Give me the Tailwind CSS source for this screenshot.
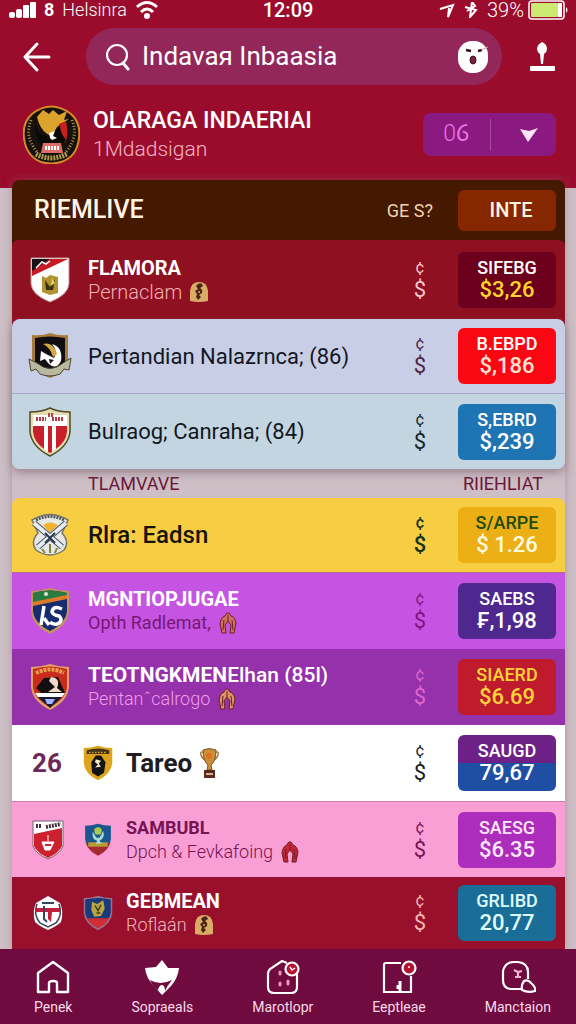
<!DOCTYPE html>
<html lang="id">
<head>
    <meta charset="UTF-8">
    <meta name="viewport" content="width=device-width, initial-scale=1.0">
    <title>Olaraga</title>
    <script src="https://cdn.jsdelivr.net/npm/@tailwindcss/browser@4"></script>
</head>
<body class="min-h-screen flex flex-col overflow-x-hidden bg-[#cdbfc5] font-[Roboto,sans-serif]">

    <!-- shared drawings -->
    <svg class="hidden">
        <symbol id="shield" viewBox="0 0 42 48">
            <path d="M2 4Q12 4 21 1Q30 4 40 4V24Q39 38 21 47Q3 38 2 24Z"/>
        </symbol>
        <symbol id="medal" viewBox="0 0 18 20">
            <path d="M0 19V9Q1 0 9 0Q17 0 18 9V19Q9 21 0 19Z" fill="#d9ac66"/>
            <path d="M8 2Q12 0 13 4L10 6Q13 8 12 11L9 13L11 15L8 18L6 15L7 12L5 9L8 7L6 4Z" fill="#4a2414"/>
            <circle cx="9" cy="10" r="1" fill="#d9ac66"/>
        </symbol>
        <symbol id="hands" viewBox="0 0 18 22">
            <path d="M6 4Q7 0 10 1L12 4Q16 5 17 11L15 21H11L12 13L9 9L6 13L7 21H3L1 12Q2 5 6 4Z" stroke="#6b1f1f" stroke-width="1"/>
            <path d="M9 3V9M5 8L4 18M13 8L14 18" fill="none" stroke="#6b1f1f" stroke-width="1"/>
        </symbol>
    </svg>

    <header class="bg-[#9b0c2c] text-white pb-6">
        <div class="h-[10px] px-2 grid grid-cols-[1fr_auto_1fr] items-center text-[18px] leading-3">
            <div class="flex items-center gap-2">
                <svg class="w-7 h-4" viewBox="0 0 28 16" fill="#fff"><rect x="1" y="10" width="6" height="6" rx="2"/><rect x="8" y="7" width="6" height="9" rx="2"/><rect x="15" y="3" width="6" height="13" rx="1"/><rect x="22" y="0" width="6" height="16" rx="1"/></svg>
                <span class="font-bold">8</span>
                <span class="font-light">Helsinra</span>
                <svg class="w-6 h-5" viewBox="0 0 24 20" fill="none" stroke="#fff" stroke-width="3"><path d="M2 7Q12 -2 22 7M6 12Q12 6 18 12"/><circle cx="12" cy="16" r="1.5" fill="#fff"/></svg>
            </div>
            <span class="font-medium text-[20px]">12:09</span>
            <div class="flex items-center justify-end gap-2">
                <svg class="w-4 h-4" viewBox="0 0 16 16" fill="none" stroke="#fff" stroke-width="2"><path d="M1 7L14 3L9 15L10 6"/></svg>
                <svg class="w-4 h-4" viewBox="0 0 16 16" fill="none" stroke="#fff" stroke-width="2"><path d="M2 5L13 8L7 15L9 0L12 4L4 9"/></svg>
                <span class="font-light text-[20px]">39%</span>
                <svg class="w-10 h-5 -ml-1" viewBox="0 0 40 20"><rect x="1" y="1" width="35" height="18" rx="3" fill="none" stroke="#fff" stroke-width="1.5"/><rect x="3" y="3" width="27" height="14" rx="1" fill="#cdea72"/><rect x="30" y="3" width="4" height="14" fill="#fff"/><path d="M38 7Q41 10 38 13Z" fill="#fff"/></svg>
            </div>
        </div>

        <div class="mt-[18px] pl-5 pr-5 flex items-center">
            <button type="button" aria-label="Kembali" class="w-[66px]">
                <svg class="w-8 h-8" viewBox="0 0 32 32" fill="none" stroke="#fff" stroke-width="3" stroke-linecap="round" stroke-linejoin="round"><path d="M29 16H5M17 3L5 16L17 29"/></svg>
            </button>
            <div class="flex-1 min-w-0 h-[57px] rounded-full bg-[#93275a] flex items-center pl-5 pr-[13px]">
                <svg class="w-6 h-7 shrink-0" viewBox="0 0 24 28" fill="none" stroke="#fff" stroke-width="2.2" stroke-linecap="round"><circle cx="11" cy="12" r="10"/><path d="M17 20L22 26" stroke-width="3"/></svg>
                <input type="text" aria-label="Cari" value="Indavaя Inbaasia" class="flex-1 min-w-0 ml-3 text-[26px] bg-transparent outline-none">
                <button type="button" aria-label="Emoji">
                    <svg class="w-8 h-8" viewBox="0 0 32 32"><rect x="1" y="0" width="30" height="32" rx="14" fill="#fff"/><path d="M9 9L14 10M21 10L25 9" stroke="#331018" stroke-width="2.5" fill="none"/><path d="M24 9L31 6" stroke="#d9a0b5"/><ellipse cx="16" cy="19" rx="3" ry="4" fill="#7c2040" stroke="#3a1020"/></svg>
                </button>
            </div>
            <button type="button" aria-label="Suara" class="ml-[27px]">
                <svg class="w-[27px] h-[30px]" viewBox="0 0 27 30" fill="#fff"><path d="M13 0Q18 2 18 7Q18 10 15 12L14 22H12L11 12Q8 10 8 6Q9 2 13 0Z"/><rect x="1" y="24" width="25" height="5" rx="1"/></svg>
            </button>
        </div>

        <div class="mt-5 pl-[23px] pr-5 flex items-center">
            <svg class="w-[57px] h-[59px] shrink-0" viewBox="0 0 57 59">
                <path d="M9 9Q28 -6 48 9Q58 18 56 33Q54 52 38 57Q28 60 18 57Q3 51 1 33Q-1 18 9 9Z" fill="#17120e" stroke="#d48b26" stroke-width="2"/>
                <path d="M8 15Q1 31 14 47M49 15Q56 31 43 47" fill="none" stroke="#b8964a" stroke-width="3" stroke-dasharray="1 2"/>
                <path d="M14 12L20 5L26 9L30 5L36 10L44 6L41 15L46 14L34 22L29 31Q18 28 14 12Z" fill="#dca42d"/>
                <path d="M36 19L43 16Q46 31 42 38L36 30Z" fill="#c81e1c"/>
                <path d="M12 17Q14 33 28 31L37 20Q37 28 43 35L38 41L18 40Q12 32 12 17Z" fill="#0a0908"/>
                <path d="M26 28L32 26L30 31L34 33L29 35L27 33Z" fill="#fff"/>
                <path d="M20 38H38L40 48H18Z" fill="#dc6d67"/><path d="M22 43H37" stroke="#fff" stroke-width="4" stroke-dasharray="2 1"/>
                <path d="M13 49Q28 57 44 49" fill="none" stroke="#a99647" stroke-width="5" stroke-dasharray="2 1"/>
            </svg>
            <div class="ml-[13px] flex-1 min-w-0">
                <h1 class="text-[23px] leading-7 font-medium whitespace-nowrap">OLARAGA INDAERIAI</h1>
                <p class="text-[21px] leading-7 font-light text-[#f3b4c4]">1Mdadsigan</p>
            </div>
            <button type="button" class="w-[133px] h-[43px] rounded-lg bg-[#8a1a7f] grid grid-cols-2 items-center text-[23px] font-light text-[#e673e6]">
                <span>0ⳓ</span>
                <span class="border-l border-[#a64aa0] h-8 flex items-center justify-center pl-3">
                    <svg class="w-5 h-4" viewBox="0 0 20 16" fill="#fde4f4"><path d="M1 2L10 4L19 1L9 15Z"/></svg>
                </span>
            </button>
        </div>
    </header>

    <main class="flex-1 -mt-2 ml-3 mr-[11px] shadow-[0_0_8px_#80657070]">
        <section class="rounded-t-lg bg-[#451800]">
            <div class="h-[60px] pl-[22px] pr-[9px] flex items-center text-[#fff3e4]">
                <h2 class="flex-1 text-[25px] font-medium">RIEMLIVE</h2>
                <span class="text-[18px] text-[#efd2ae] mr-[25px]">GE S?</span>
                <button type="button" class="w-[98px] h-[41px] rounded-md bg-[#852700] text-[20px] font-medium pl-2">INTE</button>
            </div>
            <div class="rounded-t-md bg-[#8f1021] min-h-[87px] pb-2 pl-4 pr-[9px] flex items-center text-white">
                <svg class="w-11 h-12" viewBox="0 0 44 48">
                    <path d="M3 2H41V28Q40 39 22 46Q4 39 3 28Z" fill="#fff" stroke="#b98e8e"/>
                    <path d="M4 3H40L4 20Z" fill="#c91924"/><path d="M4 3H22L4 15Z" fill="#171214"/><path d="M8 12L14 6L18 8L22 5" stroke="#fff" stroke-width="1.5" fill="none"/>
                    <path d="M14 20L18 22L22 19L30 21V37L22 39L14 36Z" fill="#b19331"/><path d="M17 24L22 31L27 23L25 34L18 34Z" fill="#3a3010"/><path d="M24 22L27 27L23 30" fill="#e4cf63"/>
                </svg>
                <div class="ml-4 flex-1">
                    <h3 class="text-[20px] leading-6 font-bold">FLAMORA</h3>
                    <p class="flex items-center gap-2 text-[20px] leading-6 font-light text-[#f4aeb4]">Pernaclam <svg class="w-[18px] h-5"><use href="#medal"/></svg></p>
                </div>
                <div class="w-5 mr-7 flex flex-col items-center text-[#f7c9cc]"><span class="text-[16px] leading-5">¢</span><span class="text-[22px] leading-6">$</span></div>
                <div class="w-[98px] h-[56px] rounded-md bg-[#6c001c] flex flex-col items-center justify-center font-medium"><span class="text-[18px] leading-5">SIFEBG</span><span class="text-[22px] leading-6 text-[#fcd62b]">$3,26</span></div>
            </div>
        </section>

        <section class="relative -mt-2 rounded-lg overflow-hidden shadow-[0_4px_10px_#7a5a6a90] text-[#131722]">
            <div class="bg-[#c8cee6] min-h-[75px] pl-4 pr-[9px] flex items-center border-b border-[#a9a9cb]">
                <svg class="w-11 h-12" viewBox="0 0 44 48">
                    <path d="M4 3Q14 4 22 1Q31 4 40 3V30Q38 40 22 46Q6 40 4 30Z" fill="#a77b3c"/><path d="M7 6Q22 3 37 6V30Q35 38 22 43Q9 38 7 30Z" fill="#100e10"/>
                    <path d="M1 27L9 31Q22 42 35 31L43 26L41 38L36 37L32 42Q22 46 12 42L8 37L3 39Z" fill="#b8b9a0" stroke="#4c4630"/>
                    <path d="M12 29L13 19L18 22L26 26Q30 19 24 12Q35 15 33 29Q28 39 20 31L17 27Z" fill="#fff"/><path d="M15 12Q25 9 29 22L25 25Q22 15 15 12Z" fill="#d3a940"/><path d="M21 27L26 28L22 32Z" fill="#191818"/>
                </svg>
                <h3 class="ml-4 flex-1 text-[22px]">Pertandian Nalazrnca; (86)</h3>
                <div class="w-5 mr-7 flex flex-col items-center text-[#512446]"><span class="text-[16px] leading-5">¢</span><span class="text-[22px] leading-6">$</span></div>
                <div class="w-[98px] h-[56px] rounded-md bg-[#fb0714] text-white flex flex-col items-center justify-center font-medium"><span class="text-[18px] leading-5">B.EBPD</span><span class="text-[22px] leading-6 text-[#ffe3d2]">$,186</span></div>
            </div>
            <div class="bg-[#c2d5e1] min-h-[75px] pl-4 pr-[9px] flex items-center">
                <svg class="w-11 h-[50px]" viewBox="0 0 44 50">
                    <path d="M2 5Q14 5 22 1Q30 5 42 5V25Q40 40 22 49Q4 40 2 25Z" fill="#e4dcae" stroke="#4c4a22" stroke-width="1.5"/><path d="M5 8H39V25Q37 38 22 46Q7 38 5 25Z" fill="#fff"/>
                    <path d="M5 19H16V42Q6 35 5 25ZM20 19H24V45L22 46L20 45ZM28 19H39V25Q38 35 28 42Z" fill="#c81f2b"/>
                    <path d="M8 12H18M24 12H36M20 8H25" stroke="#b83b45" stroke-width="4" stroke-dasharray="2 1"/>
                </svg>
                <h3 class="ml-4 flex-1 text-[22px]">Bulraog; Canraha; (84)</h3>
                <div class="w-5 mr-7 flex flex-col items-center text-[#14262b]"><span class="text-[16px] leading-5">¢</span><span class="text-[22px] leading-6">$</span></div>
                <div class="w-[98px] h-[56px] rounded-md bg-[#1f74b3] text-white flex flex-col items-center justify-center font-medium"><span class="text-[18px] leading-5">S,EBRD</span><span class="text-[22px] leading-6">$,239</span></div>
            </div>
        </section>

        <div class="h-[29px] pl-[76px] pr-[22px] flex items-center justify-between text-[18px] text-[#6b1638]">
            <span>TLAMVAVE</span>
            <span>RIIEHLIAT</span>
        </div>

        <section class="rounded-t-lg overflow-hidden">
            <div class="bg-[#f7cd42] min-h-[74px] pl-4 pr-[9px] flex items-center text-[#17130a]">
                <svg class="w-11 h-11" viewBox="0 0 44 44">
                    <path d="M4 7Q22 -4 40 7L34 20Q42 29 36 37Q22 47 8 37Q2 29 10 20Z" fill="#e8e9e4" stroke="#777768" stroke-width="1.5"/>
                    <path d="M8 7Q22 0 36 7" fill="none" stroke="#4f565c" stroke-width="3" stroke-dasharray="2 1"/>
                    <path d="M15 12Q22 7 30 12L22 20Z" fill="#f2b32f"/>
                    <path d="M6 10L34 34M38 10L10 34" stroke="#46536a" stroke-width="6"/><path d="M6 10L34 34M38 10L10 34" stroke="#e9edf2" stroke-width="4"/>
                    <path d="M17 20L27 30M27 20L17 30" stroke="#28354d" stroke-width="2"/><path d="M22 31V40M14 36L17 40M29 35L27 40" stroke="#85803f" stroke-width="2"/>
                </svg>
                <h3 class="ml-4 flex-1 text-[24px] font-medium">Rlra: Eadsn</h3>
                <div class="w-5 mr-7 flex flex-col items-center text-[#14331e] font-medium"><span class="text-[16px] leading-5">¢</span><span class="text-[22px] leading-6">$</span></div>
                <div class="w-[98px] h-[56px] rounded-md bg-[#ecaf16] flex flex-col items-center justify-center font-medium"><span class="text-[18px] leading-5 text-[#204b12]">S/ARPE</span><span class="text-[22px] leading-6 text-[#fffbe0]">$ 1.26</span></div>
            </div>
            <div class="bg-[#c654e2] min-h-[77px] pl-4 pr-[9px] flex items-center text-white border-t border-[#b26a8e]">
                <svg class="w-11 h-12" viewBox="0 0 44 48">
                    <use href="#shield" x="1" width="42" height="48" fill="#c4945c"/><path d="M5 6Q22 1 39 6V24Q38 36 22 44Q6 36 5 24Z" fill="#172c70"/><path d="M5 6Q22 1 39 6V10L5 17Z" fill="#2b7a42"/><path d="M5 15L39 8V12L5 19Z" fill="#df7a28"/><circle cx="18" cy="7" r="2" fill="#d5ecd0"/>
                    <path d="M16 19L13 38M16 31L21 38M34 22Q25 18 24 25Q25 28 31 29Q36 34 29 37Q25 38 22 35" fill="none" stroke="#fff" stroke-width="3.5"/>
                </svg>
                <div class="ml-4 flex-1">
                    <h3 class="text-[20px] leading-6 font-bold">MGNTIOPJUGAE</h3>
                    <p class="flex items-center gap-2 text-[18px] leading-6 text-[#761874]">Opth Radlemat, <svg class="w-[18px] h-[22px]" fill="#cf7360"><use href="#hands"/></svg></p>
                </div>
                <div class="w-5 mr-7 flex flex-col items-center text-[#85157c]"><span class="text-[16px] leading-5">¢</span><span class="text-[22px] leading-6">$</span></div>
                <div class="w-[98px] h-[56px] rounded-md bg-[#4e278f] flex flex-col items-center justify-center font-medium"><span class="text-[18px] leading-5">SAEBS</span><span class="text-[22px] leading-6">₣,1,98</span></div>
            </div>
            <div class="bg-[#9531aa] min-h-[76px] pl-4 pr-[9px] flex items-center text-white">
                <svg class="w-11 h-12" viewBox="0 0 44 48">
                    <use href="#shield" x="1" width="42" height="48" fill="#e0a066"/><path d="M5 6Q22 1 39 6V24Q38 36 22 44Q6 36 5 24Z" fill="#c92b1d"/><path d="M8 25L16 15L30 14L37 30L22 38Z" fill="#120f12"/><path d="M8 10Q22 3 36 10" stroke="#e8a04c" stroke-width="4" stroke-dasharray="3 1" fill="none"/>
                    <path d="M23 14Q33 15 29 25L34 29L20 29L27 24L21 18Z" fill="#f0d9c5"/><path d="M7 30H37L34 34H10Z" fill="#fff"/><path d="M10 34H34L22 45Z" fill="#171a35"/><path d="M17 36H27L24 41H19Z" fill="#9fb5ff"/>
                </svg>
                <div class="ml-4 flex-1">
                    <h3 class="text-[21px] leading-6 font-medium whitespace-nowrap"><span class="font-bold">TEOTNGKMEN</span>Elhan (85l)</h3>
                    <p class="flex items-center gap-2 text-[18px] leading-6 font-light text-[#f09cf0]">Pentanˆcalrogo <svg class="w-[18px] h-[22px]" fill="#dc9168"><use href="#hands"/></svg></p>
                </div>
                <div class="w-5 mr-7 flex flex-col items-center text-[#e264cd]"><span class="text-[16px] leading-5">¢</span><span class="text-[22px] leading-6">$</span></div>
                <div class="w-[98px] h-[56px] rounded-md bg-[#c01b2c] text-[#ffd43a] flex flex-col items-center justify-center font-medium"><span class="text-[18px] leading-5">SIAERD</span><span class="text-[22px] leading-6">$6.69</span></div>
            </div>
            <div class="bg-white min-h-[76px] pl-5 pr-[9px] flex items-center text-[#201d22]">
                <span class="w-[50px] text-[26px] font-bold text-[#6e2858]">26</span>
                <svg class="w-8 h-9" viewBox="0 0 42 48"><use href="#shield" fill="#dda51d"/><path d="M6 7Q21 2 36 7V12H6Z" fill="#45321a"/><path d="M9 10H33" stroke="#dda51d" stroke-width="2" stroke-dasharray="2 2"/><path d="M12 23L18 14H25L31 23L29 37L21 42L13 37Z" fill="#151316"/><path d="M18 19L25 21L22 25L25 29L17 30L21 26L17 23Z" fill="#f5e8c7"/></svg>
                <div class="ml-3 flex-1 flex items-center gap-2">
                    <h3 class="text-[26px] font-bold">Tareo</h3>
                    <svg class="w-[19px] h-8" viewBox="0 0 19 32"><path d="M4 6Q0 3 1 8Q2 12 6 13M15 6Q19 3 18 8Q17 12 13 13" fill="none" stroke="#a8743a" stroke-width="1.5"/><path d="M3 3Q9 0 16 3Q16 14 11 18L12 23H7L8 18Q3 14 3 3Z" fill="#c98f3c" stroke="#82501f"/><circle cx="9" cy="9" r="3" fill="#e0701c"/><path d="M4 23H15V31H4Z" fill="#5c2a20"/><path d="M6 27H13" stroke="#d6b48a" stroke-width="2"/></svg>
                </div>
                <div class="w-5 mr-7 flex flex-col items-center"><span class="text-[16px] leading-5">¢</span><span class="text-[22px] leading-6">$</span></div>
                <div class="w-[98px] h-[56px] rounded-md bg-linear-to-b from-[#6d2187] from-50% to-[#1f4fa3] to-50% text-white flex flex-col items-center justify-center font-medium"><span class="text-[18px] leading-5">SAUGD</span><span class="text-[22px] leading-6">79,67</span></div>
            </div>
            <div class="bg-[#f99fd6] min-h-[76px] pl-5 pr-[9px] flex items-center text-[#761452] border-t border-[#d07cae]">
                <svg class="w-8 h-10 mr-[18px]" viewBox="0 0 32 40"><path d="M1 1H31V26Q28 34 16 39Q4 34 1 26Z" fill="#fff" stroke="#796070"/><path d="M2 14L30 8V26Q27 33 16 38Q5 33 2 26Z" fill="#ce2130"/><path d="M4 6H10M14 7L29 4" stroke="#46333c" stroke-width="4" stroke-dasharray="2 1"/><path d="M10 22H22L18 30H13ZM16 15V21" fill="#fff" stroke="#fff"/><path d="M13 25H19" stroke="#ce2130" stroke-width="2"/></svg>
                <svg class="w-8 h-9" viewBox="0 0 42 48"><use href="#shield" x="2" y="0" width="38" height="46" fill="#1b578e"/><path d="M5 28H37Q34 39 21 45Q8 39 5 28Z" fill="#a42b2f"/><path d="M8 27H34V33H8Z" fill="#b79b35"/><circle cx="21" cy="12" r="5" fill="#aacb4a"/><path d="M14 13Q12 23 20 25L18 29H26L23 25Q31 21 28 12L23 21H19Z" fill="#a8d9d0"/></svg>
                <div class="ml-3 flex-1">
                    <h3 class="text-[18px] leading-6 font-bold">SAMBUBL</h3>
                    <p class="flex items-center gap-2 text-[18px] leading-6 font-light">Dpch &amp; Fevkafoing <svg class="w-[18px] h-[22px] shrink-0" fill="#c72537"><use href="#hands"/></svg></p>
                </div>
                <div class="w-5 mr-7 flex flex-col items-center"><span class="text-[16px] leading-5">¢</span><span class="text-[22px] leading-6">$</span></div>
                <div class="w-[98px] h-[56px] rounded-md bg-[#ac2cbc] text-[#ffe6fb] flex flex-col items-center justify-center font-medium"><span class="text-[18px] leading-5">SAESG</span><span class="text-[22px] leading-6">$6.35</span></div>
            </div>
            <div class="bg-[#98102c] min-h-[72px] pl-5 pr-[9px] flex items-center text-white">
                <svg class="w-8 h-9 mr-[18px]" viewBox="0 0 32 36"><path d="M16 1L28 8Q32 17 29 27Q25 31 16 35Q7 31 3 27Q0 17 4 8Z" fill="#fff"/><path d="M5 9Q1 20 8 28L16 32L24 28Q31 20 27 9" fill="none" stroke="#35465f" stroke-width="1.5"/><path d="M4 13H28V17H20L19 27L16 24V17H4Z" fill="#c2203a"/><path d="M10 8H22M12 11V24L15 27" stroke="#35465f" stroke-width="2" fill="none"/></svg>
                <svg class="w-8 h-9" viewBox="0 0 42 48"><use href="#shield" fill="#9b6e87"/><path d="M4 6Q21 2 38 6V24Q36 36 21 44Q6 36 4 24Z" fill="#183b7b"/><path d="M6 31H36Q31 40 21 44Q11 40 6 31Z" fill="#d22d34"/><path d="M13 9L20 12L28 7L30 18L25 28L16 29L12 20Z" fill="#b9a541"/><path d="M17 14L21 21L25 13M19 24H24" stroke="#394317" stroke-width="2" fill="none"/></svg>
                <div class="ml-3 flex-1">
                    <h3 class="text-[20px] leading-6 font-bold">GEBMEAN</h3>
                    <p class="flex items-center gap-2 text-[18px] leading-6 font-light text-[#f4b3bb]">Roflaán <svg class="w-[18px] h-5"><use href="#medal"/></svg></p>
                </div>
                <div class="w-5 mr-7 flex flex-col items-center text-[#f4b8b4]"><span class="text-[16px] leading-5">¢</span><span class="text-[22px] leading-6">$</span></div>
                <div class="w-[98px] h-[56px] rounded-md bg-[#196d97] text-[#dffcfa] flex flex-col items-center justify-center font-medium"><span class="text-[18px] leading-5">GRLIBD</span><span class="text-[22px] leading-6">20,77</span></div>
            </div>
        </section>
    </main>

    <nav class="relative h-[75px] bg-[#6f0b3e] pl-[34px] pr-[25px] pt-[10px] flex justify-between text-[14px] leading-5 text-[#fbd9ea]">
        <a href="#" class="flex flex-col items-center gap-[2px]">
            <svg class="w-9 h-9" viewBox="0 0 36 36" fill="none" stroke="#fff" stroke-width="2.4" stroke-linejoin="round"><path d="M3 14L18 3L33 14V33H22V24Q22 22 18 22Q14 22 14 24V33H3Z"/></svg>
            Penek
        </a>
        <a href="#" class="flex flex-col items-center gap-[2px]">
            <svg class="w-9 h-9" viewBox="0 0 36 36"><path d="M18 1L24 9L35 9Q34 19 27 27L18 36L10 27Q2 19 1 9L12 8Z" fill="#fff"/><path d="M6 21Q16 27 28 21Q23 27 21 32Q21 25 17 26Q14 28 14 31Q9 28 6 21Z" fill="#6f0b3e"/></svg>
            Sopraeals
        </a>
        <a href="#" class="flex flex-col items-center gap-[2px]">
            <svg class="w-9 h-9" viewBox="0 0 36 36" fill="none" stroke="#fff" stroke-width="2.2"><path d="M22 4L17 2L5 10Q3 12 3 15V28Q3 34 9 34H26Q32 34 32 28V15"/><circle cx="27" cy="10" r="6.5" fill="#b61232"/><path d="M25 8L27 11L30 9" stroke-width="1.5"/><path d="M15 13V15M23 22V25M15 24V26" stroke="#ee95bc" stroke-width="3" stroke-linecap="round"/></svg>
            Marotlopr
        </a>
        <a href="#" class="flex flex-col items-center gap-[2px]">
            <svg class="w-9 h-9" viewBox="0 0 36 36" fill="none" stroke="#fff" stroke-width="2.2"><path d="M20 4H5Q3 4 3 6V33H30V17"/><path d="M19 22V32M17 30V26" stroke-width="3"/><circle cx="28" cy="9" r="6.5" fill="#b61232"/><circle cx="28" cy="8" r="1" fill="#fff" stroke="none"/></svg>
            Eeptleae
        </a>
        <a href="#" class="flex flex-col items-center gap-[2px]">
            <svg class="w-9 h-9" viewBox="0 0 36 36" fill="none" stroke="#fff" stroke-width="2.2"><path d="M21 30H10Q3 29 3 21V12Q5 3 14 3H18Q28 4 28 13V20"/><path d="M22 31Q21 26 24 22Q28 20 31 24Q36 28 35 32Q28 34 22 31Z"/><path d="M14 11L18 13L22 12M18 13V17M15 18H21" stroke="#f4b4d0"/></svg>
            Manctaion
        </a>
    </nav>
</body>
</html>
